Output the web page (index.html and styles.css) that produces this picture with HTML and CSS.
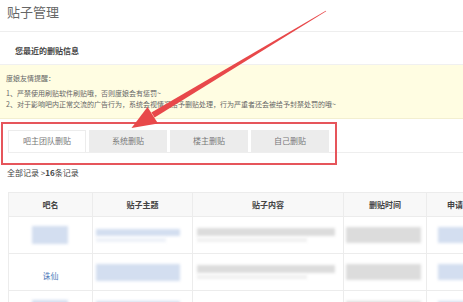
FILE: index.html
```html
<!DOCTYPE html>
<html lang="zh-CN">
<head>
    <meta charset="UTF-8">
    <title>贴子管理</title>
    <link rel="stylesheet" href="styles.css">
</head>
<body>
    <div class="page">
        <h1 class="page-title">贴子管理</h1>

        <div class="section-title">您最近的删贴信息</div>

        <!-- 提醒 -->
        <div class="notice">
            <p class="notice-head">度娘友情提醒：</p>
            <p>1、严禁使用刷贴软件刷贴哦，否则度娘会有惩罚~</p>
            <p>2、对于影响吧内正常交流的广告行为，系统会视情况给予删贴处理，行为严重者还会被给予封禁处罚的哦~</p>
        </div>

        <!-- 标签 -->
        <div class="tabs">
            <div class="tab active">吧主团队删贴</div>
            <div class="tab">系统删贴</div>
            <div class="tab">楼主删贴</div>
            <div class="tab">自己删贴</div>
        </div>

        <div class="summary">全部记录 &gt;<b>16</b>条记录</div>

        <!-- 记录表 -->
        <div class="table-wrap">
            <table class="records">
                <colgroup>
                    <col class="c-bar"><col class="c-title"><col class="c-content"><col class="c-time"><col class="c-apply">
                </colgroup>
                <thead>
                    <tr><th>吧名</th><th>贴子主题</th><th>贴子内容</th><th>删贴时间</th><th class="th-apply">申请</th></tr>
                </thead>
                <tbody>
                    <tr>
                        <td><span class="blur blue box-name"></span></td>
                        <td><span class="blur blue line-title"></span><span class="blur blue-faint line-sub"></span></td>
                        <td><span class="blur gray line-content"></span><span class="blur gray-faint line-sub2"></span></td>
                        <td><span class="blur gray box-time"></span></td>
                        <td><span class="blur blue box-apply"></span></td>
                    </tr>
                    <tr>
                        <td><a class="bar-link">诛仙</a></td>
                        <td><span class="blur blue box-title"></span></td>
                        <td><span class="blur gray line-content"></span><span class="blur gray-faint line-sub2"></span></td>
                        <td><span class="blur gray box-time"></span></td>
                        <td><span class="blur blue box-apply"></span></td>
                    </tr>
                    <tr>
                        <td><span class="blur blue box-name"></span></td>
                        <td><span class="blur blue box-title"></span></td>
                        <td><span class="blur gray line-content"></span></td>
                        <td><span class="blur gray box-time"></span></td>
                        <td><span class="blur blue box-apply"></span></td>
                    </tr>
                </tbody>
            </table>
        </div>

        <!-- 标注 -->
        <div class="mark-box"></div>
        <svg class="mark-arrow" width="463" height="302" viewBox="0 0 463 302">
            <polygon points="326.2,11.3 325.8,10.7 151.4,112.4 154.6,117.6" fill="#e8484a"/>
            <polygon points="131.5,128 147.5,107 158,123.5" fill="#e8484a"/>
        </svg>
    </div>
</body>
</html>
```

FILE: styles.css
```css
/* 基本 */
body {
    margin: 0;
    font-family: "Noto Sans CJK SC", "Noto Sans", sans-serif;
    background-color: #fff;
    color: #333;
    overflow: hidden;
}

.page {
    position: relative;
    width: 463px;
    height: 302px;
    overflow: hidden;
}

.page-title {
    margin: 0;
    height: 31px;
    padding-left: 7px;
    font-size: 13px;
    font-weight: normal;
    line-height: 24px;
    color: #666;
    border-bottom: 1px solid #eee;
}

.section-title {
    height: 32px;
    padding-left: 15px;
    line-height: 38px;
    font-size: 8px;
    font-weight: bold;
    color: #444;
    border-bottom: 1px solid #f0f0f0;
}

/* 提醒 */
.notice {
    height: 54px;
    padding: 8px 6px 0;
    box-sizing: border-box;
    background-color: #fffde2;
    border-bottom: 1px solid #f3efd0;
    font-size: 7px;
    color: #666;
}

.notice p {
    margin: 0;
    line-height: 11px;
}

.notice .notice-head {
    margin-bottom: 4px;
}

/* 标签 */
.tabs {
    display: flex;
    gap: 3px;
    margin: 11px 0 0 8px;
    border-bottom: 1px solid #eee;
}

.tab {
    width: 78px;
    height: 22px;
    line-height: 22px;
    text-align: center;
    font-size: 8px;
    color: #777;
    background-color: #ececec;
}

.tab.active {
    background-color: #fff;
    box-shadow: inset 1px 1px 0 #ececec, inset -1px 0 0 #ececec;
}

.summary {
    padding: 14px 0 0 7px;
    height: 25px;
    font-size: 8px;
    color: #444;
}

.summary b {
    font-weight: bold;
}

/* 记录表 */
.table-wrap {
    margin-left: 8px;
    width: 520px;
}

.records {
    width: 520px;
    table-layout: fixed;
    border-collapse: collapse;
}

.c-bar { width: 84px; }
.c-title { width: 100px; }
.c-content { width: 151px; }
.c-time { width: 83px; }
.c-apply { width: 102px; }

.records th,
.records td {
    border: 1px solid #ececec;
    text-align: center;
    vertical-align: middle;
    padding: 0;
}

.records th {
    height: 23px;
    background-color: #f8f8f8;
    font-size: 8px;
    font-weight: bold;
    color: #444;
}

.records .th-apply {
    text-align: left;
    padding-left: 20px;
}

.records td {
    height: 36px;
}

.bar-link {
    font-size: 8px;
    color: #4a78b8;
}

/* 模糊内容 */
.blur {
    display: block;
    filter: blur(1.5px);
}

.blue { background-color: #d3def0; }
.blue-faint { background-color: #edf1f8; }
.gray { background-color: #dcdcdc; }
.gray-faint { background-color: #f0f0f0; }

.box-name { width: 36px; height: 18px; margin-left: 23px; }
.line-title { width: 84px; height: 7px; margin-left: 3px; }
.line-sub { width: 70px; height: 4px; margin: 2px 0 0 3px; }
.box-title { width: 84px; height: 17px; margin-left: 3px; }
.line-content { width: 138px; height: 8px; margin-left: 4px; }
.line-sub2 { width: 110px; height: 4px; margin: 2px 0 0 4px; }
.box-time { width: 75px; height: 16px; margin-left: 2px; }
.box-apply { width: 60px; height: 16px; margin-left: 11px; }

/* 标注 */
.mark-box {
    position: absolute;
    left: 1px;
    top: 122px;
    width: 332px;
    height: 39px;
    border: 2px solid #e6555b;
}

.mark-arrow {
    position: absolute;
    left: 0;
    top: 0;
}
```
